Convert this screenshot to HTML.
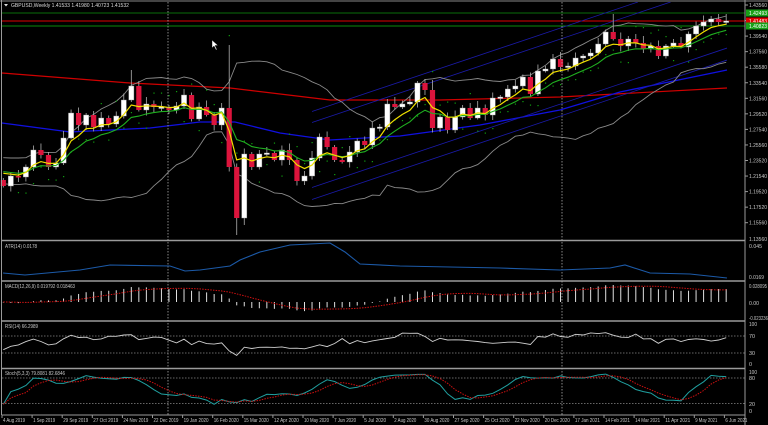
<!DOCTYPE html><html><head><style>
html,body{margin:0;padding:0;background:#000;width:768px;height:425px;overflow:hidden}
svg{display:block}
text{font-family:"Liberation Sans",sans-serif;font-size:5.4px;fill:#c8c8c8}
</style></head><body>
<svg id="s" width="768" height="425" xmlns="http://www.w3.org/2000/svg">
<rect width="768" height="425" fill="#000"/>
</svg>
<script>
var S=document.getElementById('s'),out='';
function ln(x1,y1,x2,y2,c,w,d){out+='<line x1="'+x1+'" y1="'+y1+'" x2="'+x2+'" y2="'+y2+'" stroke="'+c+'" stroke-width="'+(w||1)+'"'+(d?' stroke-dasharray="'+d+'"':'')+'/>';}
function pl(pts,c,w,d){out+='<polyline fill="none" points="'+pts.map(function(p){return p[0].toFixed(1)+','+p[1].toFixed(1)}).join(' ')+'" stroke="'+c+'" stroke-width="'+(w||1)+'"'+(d?' stroke-dasharray="'+d+'"':'')+'/>';}
function tx(x,y,t,c,tl){out+='<text x="'+x+'" y="'+y+'"'+(c?' style="fill:'+c+'"':'')+(tl?' textLength="'+tl+'" lengthAdjust="spacingAndGlyphs"':'')+'>'+t+'</text>';}
var C=[186,176,177,167,150,155,167,163,138,113,125,115,127,118,124,116,100,86,110,104,107,107,110,106,95,119,107,115,125,108,167,218,154,167,154,153,160,150,160,181,176,158,137,147,160,162,152,141,145,128,127,104,107,104,102,83,90,128,117,130,117,108,118,108,115,98,97,89,86,77,94,71,69,59,67,66,58,56,53,44,32,39,46,39,43,49,46,56,46,43,47,34,26,22,19,22,21];
var N=C.length,X=function(i){return 3.3+7.53*i};
var O=[],H=[],L=[];
for(var i=0;i<N;i++){var o=i?C[i-1]:180;O.push(o);var r=(i*37%11)/2+2;H.push(Math.min(o,C[i])-r);L.push(Math.max(o,C[i])+((i*53)%9)/2+1.5);}
H[30]=45;L[31]=235;L[32]=225;H[17]=70;H[57]=80;H[81]=14;
var P=[];for(i=0;i<25;i++)P.push(170+8*Math.sin(i));var A=P.concat(C);
function sma(a,n,k){var s=0;for(var j=k-n+1;j<=k;j++)s+=a[j];return s/n}
function ema(a,n){var r=[],k=2/(n+1),e=a[0];for(var j=0;j<a.length;j++){e=a[j]*k+e*(1-k);r.push(e)}return r}
ln(2,13,745,13,'#0a6e0a',1);ln(2,26,745,26,'#0a8a0a',1);ln(2,21,745,21,'#e00000',1);
pl([[2,73],[130,83],[230,88],[330,100],[440,100],[560,97],[727,88]],'#d00000',1.2);
pl([[2,123],[70,132],[150,128],[200,122],[235,122],[280,133],[330,140],[400,136],[480,125],[560,110],[620,92],[727,70]],'#1010e0',1.3);
[111.5,122.5,187.5,199.5].forEach(function(b){var x2=727,y2=b-0.336*(x2-312);if(y2<2){x2=312+(b-2)/0.336;y2=2}ln(312,b,x2,y2,'#1a1aa8',0.8)});
var up=[],lo=[],ma5=[],ma10=[];var e5=ema(A,5),e10=ema(A,10);
for(i=0;i<N;i++){var k=i+25,m=sma(A,20,k),v=0;for(var j=k-19;j<=k;j++)v+=(A[j]-m)*(A[j]-m);v=Math.sqrt(v/20);up.push([X(i),m-2*v]);lo.push([X(i),m+2*v]);ma5.push([X(i),e5[k]]);ma10.push([X(i),e10[k]]);}
pl(up,'#8a8a8a',0.9);pl(lo,'#8a8a8a',0.9);
for(i=2;i<N;i+=1){var d=(C[i]<C[Math.max(0,i-4)])?L[i]+8+((i%5)):H[i]-8-((i%4));out+='<rect x="'+(X(i)-0.5)+'" y="'+d+'" width="1.2" height="1.2" fill="#10a010"/>';}
for(i=0;i<N;i++){var x=X(i),o=O[i],c=C[i],t=Math.min(o,c),b=Math.max(o,c);if(b-t<1.5)b=t+1.5;
ln(x,H[i],x,L[i],'#b0b0b0',0.8);
if(c<=o)out+='<rect x="'+(x-2.6)+'" y="'+t+'" width="5.2" height="'+(b-t)+'" fill="#fff" stroke="#999" stroke-width="0.4"/>';
else out+='<rect x="'+(x-2.6)+'" y="'+t+'" width="5.2" height="'+(b-t)+'" fill="#dc143c"/>';}
pl(ma10,'#20b020',1.1);pl(ma5,'#f0e000',1.2);
out+='<path d="M212,40 l0,8 l2,-2 l2,4 l1,-0.5 l-2,-4 l3,0 z" fill="#fff" stroke="#000" stroke-width="0.4"/>';
out+='<rect x="0" y="0" width="768" height="2" fill="#444"/>';
tx(11,7,'GBPUSD,Weekly  1.41533 1.41980 1.40723 1.41532','#ddd',118);out+='<path d="M4,4 l4,0 l-2,2.5 z" fill="#ddd"/>';
[240.5,281,321,368.5].forEach(function(y){ln(2,y,745,y,'#9a9a9a',1.6)});
ln(2,415,745,415,'#9a9a9a',1);ln(745,0,745,425,'#9a9a9a',1);ln(1.5,0,1.5,415,'#9a9a9a',1);
ln(168,2,168,415,'#aaa',0.8,'1.5,1.5');ln(562,2,562,415,'#aaa',0.8,'1.5,1.5');
var pr=['1.43560','1.41520','1.39540','1.37560','1.35580','1.33540','1.31560','1.29520','1.27540','1.25560','1.23520','1.21540','1.19520','1.17520','1.15560'];
pr.forEach(function(p,j){var y=5+15.55*j;ln(745,y,748,y,'#999');if(j!=1)tx(749,y+2,p,0,18)});
function box(y,c,t){out+='<rect x="746" y="'+(y-3.5)+'" width="22" height="7" fill="'+c+'"/>';tx(749,y+2,t,'#fff',18)}
box(13,'#18a018','1.42493');box(21,'#e00000','1.41483');box(26,'#18a018','1.40823');
tx(749,241,'1.13560',0,18);
pl([[3,273],[25,275],[80,270],[110,265],[170,266],[185,271],[200,270],[230,266],[240,260],[260,252],[290,245],[330,243],[345,252],[360,264],[400,266],[500,268],[560,270],[610,268],[625,265],[650,273],[690,274],[727,278]],'#1c5aa8',1.1);
tx(5,248,'ATR(14) 0.0178',0,32);tx(749,248,'0.045',0,13);tx(749,279,'0.0169',0,15);
var e12=ema(A,12),e26=ema(A,26),mac=[];for(i=0;i<A.length;i++)mac.push(e26[i]-e12[i]);
var sig=[];for(i=0;i<N;i++){var k=i+25;sig.push([X(i),302-0.85*sma(mac,9,k)]);var h=302-0.85*mac[k];ln(X(i),302,X(i),h,'#e0e0e0',1)}
pl(sig,'#d01010',1,'1.5,1.2');
tx(5,288,'MACD(12,26,9) 0.019792 0.018463',0,70);tx(749,288,'0.028095',0,18);tx(749,305,'0.00',0,10);tx(749,320,'-0.023236',0,19);
ln(2,336,745,336,'#888',0.7,'1.5,1.5');ln(2,353,745,353,'#888',0.7,'1.5,1.5');
var rs=[];for(i=0;i<N;i++){var k=i+25,g=0,l=0;for(j=k-13;j<=k;j++){var d=A[j-1]-A[j];if(d>0)g+=d;else l-=d}var r=l==0?100:100-100/(1+g/l);rs.push([X(i),364-0.4*r])}
pl(rs,'#d0d0d0',0.9);
tx(5,328,'RSI(14) 66.2989',0,33);tx(749,326,'100',0,8);tx(749,338,'70',0,6);tx(749,355,'30',0,6);tx(749,366,'0',0,3);
ln(2,378,745,378,'#888',0.7,'1.5,1.5');ln(2,403.5,745,403.5,'#888',0.7,'1.5,1.5');
var kr=[];for(i=0;i<N;i++){var hh=1e9,ll=-1e9;for(j=Math.max(0,i-9);j<=i;j++){hh=Math.min(hh,H[j]);ll=Math.max(ll,L[j])}kr.push(100*(ll-C[i])/(ll-hh))}
var ks=[],ds=[],kv=[];for(i=0;i<N;i++){var s=0,c2=0;for(j=Math.max(0,i-3);j<=i;j++){s+=kr[j];c2++}kv.push(s/c2);ks.push([X(i),410.5-0.395*kv[i]])}
for(i=0;i<N;i++){var s=0,c2=0;for(j=Math.max(0,i-3);j<=i;j++){s+=kv[j];c2++}ds.push([X(i),410.5-0.395*s/c2])}
pl(ks,'#20a0a0',1);pl(ds,'#d01010',1,'1.5,1.2');
tx(5,375,'Stoch(5,3,3) 79.8081 82.6846',0,60);tx(749,374,'100',0,8);tx(749,380,'80',0,6);tx(749,406,'20',0,6);tx(749,413,'0',0,3);
var dt=['4 Aug 2019','1 Sep 2019','29 Sep 2019','27 Oct 2019','24 Nov 2019','22 Dec 2019','19 Jan 2020','16 Feb 2020','15 Mar 2020','12 Apr 2020','10 May 2020','7 Jun 2020','5 Jul 2020','2 Aug 2020','30 Aug 2020','27 Sep 2020','25 Oct 2020','22 Nov 2020','20 Dec 2020','17 Jan 2021','14 Feb 2021','14 Mar 2021','11 Apr 2021','9 May 2021','6 Jun 2021'];
dt.forEach(function(t,j){var x=2+j*30.1;ln(x,415,x,418,'#999');tx(x+1,422,t,0,t.length>10?25:22)});
S.innerHTML+=out;
</script>
</body></html>
